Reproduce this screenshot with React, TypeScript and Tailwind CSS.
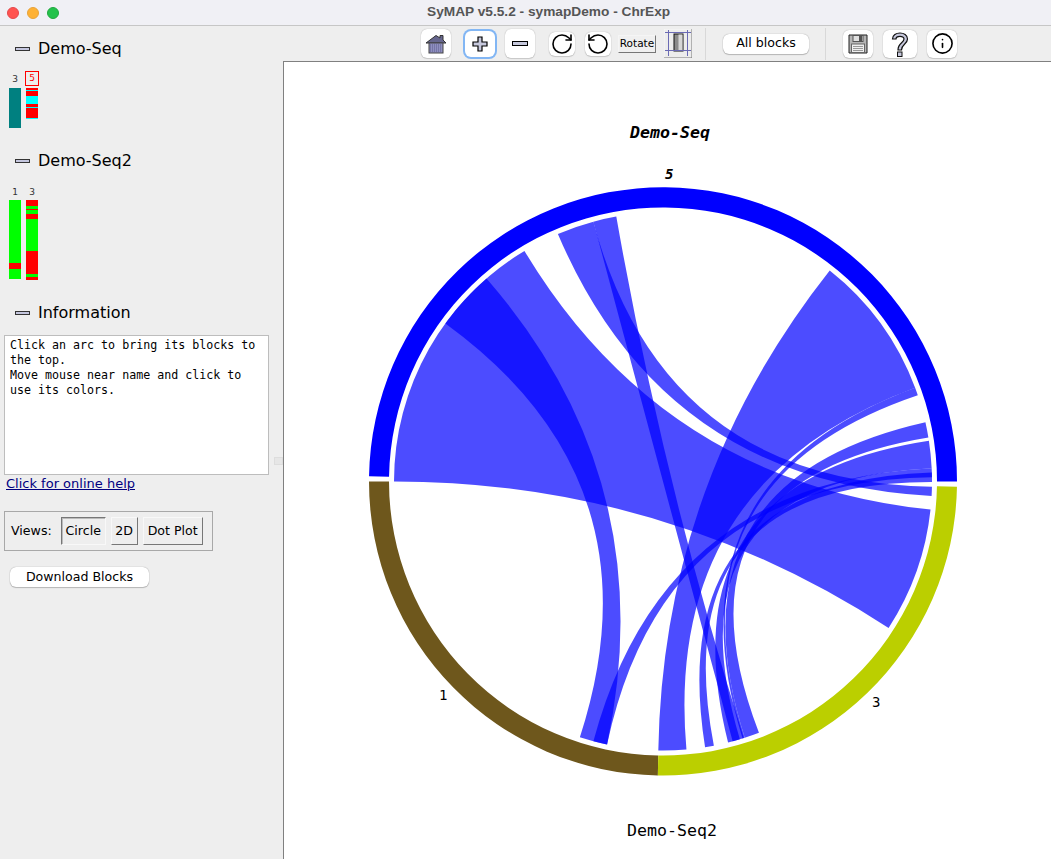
import React from 'react';
import { RotateCw, RotateCcw, Info } from 'lucide-react';

const CX = 663;
const CY = 481.5;
const R_CHORD = 269;

const pt = (deg: number, r: number) => {
  const a = (deg * Math.PI) / 180;
  return [+(CX + r * Math.cos(a)).toFixed(2), +(CY - r * Math.sin(a)).toFixed(2)];
};

const arc = (from: number, to: number, rOut: number, rIn: number) => {
  const [x1, y1] = pt(from, rOut);
  const [x2, y2] = pt(to, rOut);
  const [x3, y3] = pt(to, rIn);
  const [x4, y4] = pt(from, rIn);
  return `M${x1} ${y1}A${rOut} ${rOut} 0 0 0 ${x2} ${y2}L${x3} ${y3}A${rIn} ${rIn} 0 0 1 ${x4} ${y4}Z`;
};

// source a1..a2 and target b1..b2, both counter-clockwise
const ribbon = (a1: number, a2: number, b1: number, b2: number) => {
  const [ax1, ay1] = pt(a1, R_CHORD);
  const [ax2, ay2] = pt(a2, R_CHORD);
  const [bx1, by1] = pt(b1, R_CHORD);
  const [bx2, by2] = pt(b2, R_CHORD);
  return `M${ax1} ${ay1}A${R_CHORD} ${R_CHORD} 0 0 0 ${ax2} ${ay2}Q${CX} ${CY} ${bx1} ${by1}A${R_CHORD} ${R_CHORD} 0 0 0 ${bx2} ${by2}Q${CX} ${CY} ${ax1} ${ay1}Z`;
};

const ribbons: [number, number, number, number][] = [
  [121, 180, -33, -6],
  [131, 144, -108, -102],
  [105, 113, -3.1, -1.1],
  [100, 105, -75, -72.5],
  [20.4, 51.7, -91, -85],
  [18.7, 20.4, -72.8, -72.3],
  [9.4, 12.7, -72.3, -69.1],
  [2.8, 8.7, -76, -73.4],
  [0.9, 2.8, -105, -102],
  [-0.1, 1.9, -81, -79.1],
];

const Chart = () => (
  <svg viewBox="284 62 767 797" className="block h-full w-full">
    <path d={arc(0, 179, 294, 274)} fill="#0000ff" />
    <path d={arc(180, 269, 294, 274)} fill="#6e571c" />
    <path d={arc(269, 359, 294, 274)} fill="#bbcf00" />
    {ribbons.map((r, i) => (
      <path key={i} d={ribbon(r[0], r[1], r[2], r[3])} fill="#0000ff" fillOpacity={0.7} />
    ))}
    <g fontFamily="'DejaVu Sans Mono', monospace" fill="#000">
      <text x="630" y="138" fontSize="16.6" fontWeight="700" fontStyle="italic">Demo-Seq</text>
      <text x="665" y="179" fontSize="14" fontWeight="700" fontStyle="italic">5</text>
      <text x="439" y="700" fontSize="14">1</text>
      <text x="872" y="707" fontSize="14">3</text>
      <text x="627" y="836" fontSize="16.6">Demo-Seq2</text>
    </g>
  </svg>
);

type Seg = [number, string];

const Bar = ({ segs }: { segs: Seg[] }) => (
  <div className="flex w-3 flex-col">
    {segs.map(([h, c], i) => (
      <div key={i} style={{ height: h, backgroundColor: c }} />
    ))}
  </div>
);

const RED = '#ff0000';
const GREEN = '#00ff00';
const CYAN = '#00ffff';

const seqBars = {
  a3: [[40, '#008080']] as Seg[],
  a5: [[1.5, RED], [1, CYAN], [5.5, RED], [8, CYAN], [3, RED], [1, CYAN], [10, RED], [1, CYAN]] as Seg[],
  b1: [[63, GREEN], [6, RED], [10, GREEN]] as Seg[],
  b3: [[6, RED], [3, GREEN], [1, RED], [4, GREEN], [5, RED], [32, GREEN], [23, RED], [3, GREEN], [3, RED]] as Seg[],
};

const SectionHeader = ({ title }: { title: string }) => (
  <div className="flex h-5 items-center pl-[15px]">
    <div className="h-[4px] w-[15px] border border-[#333] bg-[#c4c6de]" />
    <span className="ml-2 text-[16px] text-black">{title}</span>
  </div>
);

const BarLabel = ({ text, boxed }: { text: string; boxed?: boolean }) =>
  boxed ? (
    <div className="flex h-[15px] w-[14px] -translate-x-px -translate-y-px items-center justify-center border border-[#ff0000] text-[9px] text-[#ff0000]">
      {text}
    </div>
  ) : (
    <div className="flex h-[15px] w-3 items-center justify-center text-[9px] text-[#333]">{text}</div>
  );

const Sidebar = () => (
  <aside className="relative h-full w-[283px] shrink-0 [font-family:'DejaVu_Sans',sans-serif]">
    <div className="pt-[13px]">
      <SectionHeader title="Demo-Seq" />
    </div>
    <div className="mt-[13px] flex gap-[5px] pl-[9px]">
      <div>
        <BarLabel text="3" />
        <div className="mt-px"><Bar segs={seqBars.a3} /></div>
      </div>
      <div>
        <BarLabel text="5" boxed />
        <div className="mt-px"><Bar segs={seqBars.a5} /></div>
      </div>
    </div>
    <div className="mt-[23px]">
      <SectionHeader title="Demo-Seq2" />
    </div>
    <div className="mt-[14px] flex gap-[5px] pl-[9px]">
      <div>
        <BarLabel text="1" />
        <Bar segs={seqBars.b1} />
      </div>
      <div>
        <BarLabel text="3" />
        <Bar segs={seqBars.b3} />
      </div>
    </div>
    <div className="mt-[23px]">
      <SectionHeader title="Information" />
    </div>
    <div className="ml-1 mt-3 h-[140px] w-[265px] border border-[#bdbdbd] bg-white px-[5px] pt-[2px] text-[11.65px] leading-[15px] text-black [font-family:'DejaVu_Sans_Mono',monospace]">
      Click an arc to bring its blocks to
      <br />
      the top.
      <br />
      Move mouse near name and click to
      <br />
      use its colors.
    </div>
    <a className="ml-[6px] mt-px block text-[13px] leading-4 text-[#000080] underline">Click for online help</a>
    <div className="ml-1 mt-[19px] flex h-[40px] w-[209px] items-center border border-[#a8a8a8] pl-[6px] text-[12.6px] text-black">
      <span className="mr-[9px]">Views:</span>
      <button className="h-[28px] w-[45px] border border-[#f8f8f8] border-l-[#777] border-t-[#777] bg-[#eeeeee] shadow-[inset_1px_1px_0_#bbb]">Circle</button>
      <button className="ml-[5px] h-[28px] w-[27px] border border-[#f8f8f8] border-b-[#777] border-r-[#777] bg-[#eeeeee]">2D</button>
      <button className="ml-[5px] h-[28px] w-[60px] border border-[#f8f8f8] border-b-[#777] border-r-[#777] bg-[#eeeeee]">Dot Plot</button>
    </div>
    <button className="ml-[10px] mt-[16px] h-[20px] w-[139px] rounded-[6px] bg-white text-[12.6px] text-black shadow-[0_0_1px_#888,0_1px_1px_#bbb]">Download Blocks</button>
    <div className="absolute left-[274px] top-[431px] h-[8px] w-[9px] border border-[#ddd] bg-[#e6e6e6]" />
  </aside>
);

const IconBtn = ({ className, children }: { className: string; children: React.ReactNode }) => (
  <button className={`flex shrink-0 items-center justify-center rounded-[6px] bg-white shadow-[0_0_1px_#999,0_1px_1px_#ccc] ${className}`}>
    {children}
  </button>
);

const HomeIcon = () => (
  <svg width="22" height="20" viewBox="0 0 22 20">
    <path d="M1 9 11 1.5l4 2.5V1.5h3V6l3 3z" fill="#66668e" stroke="#333" />
    <rect x="4" y="9" width="14" height="10" fill="#8f8fc0" stroke="#444" />
    <path d="M5 11h12M5 13h12M5 15h12M5 17h12" stroke="#5c5c8c" strokeDasharray="1 1" />
  </svg>
);

const PlusIcon = () => (
  <svg width="16" height="16" viewBox="0 0 16 16">
    <path d="M6 1h4v5h5v4h-5v5H6v-5H1V6h5z" fill="#c6c8dc" stroke="#000" strokeWidth="1.2" />
  </svg>
);

const MinusIcon = () => (
  <svg width="16" height="6" viewBox="0 0 16 6">
    <rect x="0.5" y="0.5" width="15" height="4" fill="#c6c8dc" stroke="#000" />
  </svg>
);

const ScaleIcon = () => (
  <svg width="28" height="29" viewBox="0 0 28 29">
    <rect x="0" y="0" width="28" height="29" fill="#ececec" />
    <path d="M0 29V0h28" fill="none" stroke="#fafafa" />
    <path d="M28 0v29H0" fill="none" stroke="#777" />
    <rect x="10" y="5" width="9" height="17" fill="#8a8a8a" stroke="#111" />
    <rect x="14.5" y="5.5" width="4" height="16" fill="#d6d6d6" />
    <path d="M4.5 1v26M23.5 1v26M1 3.5h26M1 21.5h26" stroke="#6a6ab4" fill="none" />
  </svg>
);

const SaveIcon = () => (
  <svg width="20" height="20" viewBox="0 0 20 20">
    <path d="M1 1h18v18H1z" fill="#b6b6b6" stroke="#222" />
    <rect x="5" y="1.5" width="10" height="6" fill="#e0e0e0" stroke="#555" />
    <rect x="11" y="2" width="3" height="5" fill="#555" />
    <rect x="3.5" y="10" width="13" height="8.5" fill="#efefef" stroke="#666" />
    <path d="M5 12.5h10M5 14.5h10M5 16.5h10" stroke="#999" />
  </svg>
);

const HelpIcon = () => (
  <svg width="18" height="26" viewBox="0 0 18 26">
    <path d="M1.5 8C1.5 0 16.5 0 16.5 8c0 5-6 5-6 11H7c0-7 6-7 6-11 0-3.500-8-3.500-8 0z" fill="#c6c8dc" stroke="#111" strokeWidth="1.2" />
    <rect x="6.500" y="21" width="4.500" height="4.500" fill="#c6c8dc" stroke="#111" />
  </svg>
);

const Toolbar = () => (
  <div className="flex h-[35px] shrink-0 items-center pl-[138px]">
    <IconBtn className="h-[29px] w-[30px]"><HomeIcon /></IconBtn>
    <IconBtn className="ml-[14px] h-[26px] w-[30px] ring-2 ring-[#82b6f4]"><PlusIcon /></IconBtn>
    <IconBtn className="ml-[10px] h-[29px] w-[30px]"><MinusIcon /></IconBtn>
    <IconBtn className="ml-[14px] h-[24px] w-[26px]"><RotateCw size={24} strokeWidth={1.6} color="#000" /></IconBtn>
    <IconBtn className="ml-[10px] h-[24px] w-[26px]"><RotateCcw size={24} strokeWidth={1.6} color="#000" /></IconBtn>
    <button className="ml-[7px] h-[18px] w-[38px] shrink-0 border border-[#f5f5f5] border-b-[#777] border-r-[#777] bg-[#f0f0f0] text-[10.5px] leading-none text-black">Rotate</button>
    <div className="ml-[8px] h-[29px] w-[28px] shrink-0"><ScaleIcon /></div>
    <div className="ml-[13px] h-[32px] w-px shrink-0 bg-[#d8d8d8]" />
    <button className="ml-[17px] h-[20px] w-[86px] shrink-0 rounded-[6px] bg-white text-[12.6px] text-black shadow-[0_0_1px_#888,0_1px_1px_#bbb]">All blocks</button>
    <div className="ml-[16px] h-[32px] w-px shrink-0 bg-[#d8d8d8]" />
    <IconBtn className="ml-[17px] h-[28px] w-[30px]"><SaveIcon /></IconBtn>
    <IconBtn className="ml-[10px] h-[28px] w-[34px]"><HelpIcon /></IconBtn>
    <IconBtn className="ml-[10px] h-[28px] w-[30px]"><Info size={23} strokeWidth={1.7} color="#000" /></IconBtn>
  </div>
);

const TitleBar = () => (
  <div className="flex h-[26px] shrink-0 items-center border-b border-[#c6c6c6] bg-[#f0f0f5]">
    <div className="flex gap-2 pl-[7px]">
      <span className="h-3 w-3 rounded-full border border-[#e5484d] bg-[#ff5350]" />
      <span className="h-3 w-3 rounded-full border border-[#e8a33a] bg-[#feb134]" />
      <span className="h-3 w-3 rounded-full border border-[#21a83f] bg-[#23c24b]" />
    </div>
    <span className="ml-[368px] text-[13.7px] font-bold text-[#555] [font-family:'Liberation_Sans',sans-serif]">
      SyMAP v5.5.2 - symapDemo - ChrExp
    </span>
  </div>
);

export default function App() {
  return (
    <div className="flex h-[859px] w-[1051px] flex-col overflow-hidden bg-[#eeeeee]">
      <TitleBar />
      <div className="flex min-h-0 flex-1">
        <Sidebar />
        <div className="flex min-w-0 flex-1 flex-col [font-family:'DejaVu_Sans',sans-serif]">
          <Toolbar />
          <div className="min-h-0 flex-1 border-l border-t border-[#808080] bg-white">
            <Chart />
          </div>
        </div>
      </div>
    </div>
  );
}
